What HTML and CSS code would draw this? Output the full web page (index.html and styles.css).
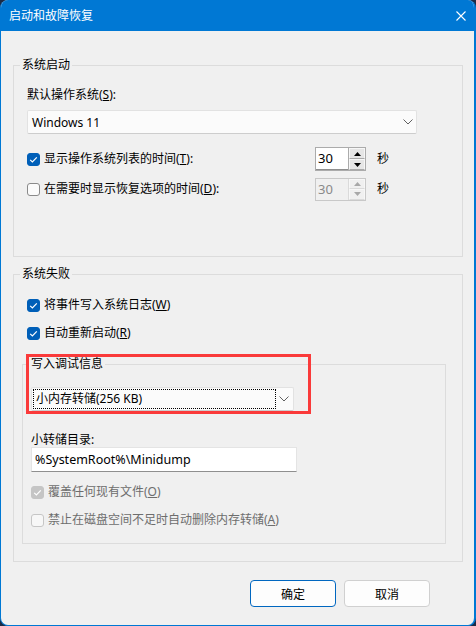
FILE: index.html
```html
<!DOCTYPE html>
<html lang="zh-CN">
<head>
    <meta charset="UTF-8">
    <title>启动和故障恢复</title>
    <link rel="stylesheet" href="styles.css">
</head>
<body>
    <div class="window">
        <div class="titlebar">
            <span class="title">启动和故障恢复</span>
            <svg class="close" width="10" height="10" viewBox="0 0 10 10">
                <path d="M0.5 0.5 L9.5 9.5 M9.5 0.5 L0.5 9.5" stroke="#fff" stroke-width="1.1" fill="none"/>
            </svg>
        </div>

        <div class="content">
            <fieldset class="group startup">
                <legend>系统启动</legend>
                <div class="field-label">默认操作系统(<u>S</u>):</div>
                <div class="combo combo-os">
                    <span>Windows 11</span>
                    <svg class="chevron" width="10" height="6" viewBox="0 0 10 6"><path d="M0.5 0.5 L5 5 L9.5 0.5" stroke="#606060" fill="none"/></svg>
                </div>

                <div class="timer-row first">
                    <label class="check">
                        <span class="box checked">
                            <svg width="13" height="13" viewBox="0 0 13 13"><path d="M3.2 6.8 L5.4 9 L9.8 4.3" stroke="#fff" stroke-width="1.2" fill="none"/></svg>
                        </span>
                        <span>显示操作系统列表的时间(<u>T</u>):</span>
                    </label>
                    <div class="spin">
                        <span class="spin-value">30</span>
                        <span class="spin-buttons">
                            <span class="spin-btn"><svg width="7" height="4" viewBox="0 0 7 4"><path d="M0 4 L3.5 0 L7 4 Z" fill="#000"/></svg></span>
                            <span class="spin-btn"><svg width="7" height="4" viewBox="0 0 7 4"><path d="M0 0 L3.5 4 L7 0 Z" fill="#000"/></svg></span>
                        </span>
                    </div>
                    <span class="unit">秒</span>
                </div>

                <div class="timer-row">
                    <label class="check">
                        <span class="box"></span>
                        <span>在需要时显示恢复选项的时间(<u>D</u>):</span>
                    </label>
                    <div class="spin disabled">
                        <span class="spin-value">30</span>
                        <span class="spin-buttons">
                            <span class="spin-btn"><svg width="7" height="4" viewBox="0 0 7 4"><path d="M0 4 L3.5 0 L7 4 Z" fill="#a8a8a8"/></svg></span>
                            <span class="spin-btn"><svg width="7" height="4" viewBox="0 0 7 4"><path d="M0 0 L3.5 4 L7 0 Z" fill="#a8a8a8"/></svg></span>
                        </span>
                    </div>
                    <span class="unit">秒</span>
                </div>
            </fieldset>

            <fieldset class="group failure">
                <legend>系统失败</legend>
                <label class="check row-log">
                    <span class="box checked">
                        <svg width="13" height="13" viewBox="0 0 13 13"><path d="M3.2 6.8 L5.4 9 L9.8 4.3" stroke="#fff" stroke-width="1.2" fill="none"/></svg>
                    </span>
                    <span>将事件写入系统日志(<u>W</u>)</span>
                </label>
                <label class="check row-restart">
                    <span class="box checked">
                        <svg width="13" height="13" viewBox="0 0 13 13"><path d="M3.2 6.8 L5.4 9 L9.8 4.3" stroke="#fff" stroke-width="1.2" fill="none"/></svg>
                    </span>
                    <span>自动重新启动(<u>R</u>)</span>
                </label>

                <fieldset class="group debug">
                    <legend>写入调试信息</legend>
                    <div class="combo combo-dump">
                        <span class="focus-rect">小内存转储(256 KB)</span>
                        <svg class="chevron" width="10" height="6" viewBox="0 0 10 6"><path d="M0.5 0.5 L5 5 L9.5 0.5" stroke="#606060" fill="none"/></svg>
                    </div>
                    <div class="field-label dump-label">小转储目录:</div>
                    <div class="textbox">%SystemRoot%\Minidump</div>

                    <label class="check disabled row-overwrite">
                        <span class="box checked">
                            <svg width="13" height="13" viewBox="0 0 13 13"><path d="M3.2 6.8 L5.4 9 L9.8 4.3" stroke="#fff" stroke-width="1.2" fill="none"/></svg>
                        </span>
                        <span>覆盖任何现有文件(<u>O</u>)</span>
                    </label>
                    <label class="check disabled row-autodelete">
                        <span class="box"></span>
                        <span>禁止在磁盘空间不足时自动删除内存转储(<u>A</u>)</span>
                    </label>
                </fieldset>
            </fieldset>

            <div class="buttons">
                <button class="btn default">确定</button>
                <button class="btn">取消</button>
            </div>
        </div>

        <!-- annotation box drawn over the dialog -->
        <div class="highlight"></div>
    </div>
</body>
</html>
```

FILE: styles.css
```css
* {
    box-sizing: border-box;
}

body {
    margin: 0;
    background: #1c2b45;
    font-family: "Noto Sans", "Noto Sans CJK SC", sans-serif;
    font-size: 12px;
    color: #000;
}

u {
    text-decoration: underline;
    text-underline-offset: 1px;
}

.window {
    position: relative;
    width: 476px;
    height: 626px;
    background: #f0f0f0;
    border-left: 1px solid #0078d4;
    border-right: 2px solid #0078d4;
    border-bottom: 1px solid #0078d4;
    border-radius: 8px;
    overflow: hidden;
}

.titlebar {
    height: 31px;
    background: #0078d4;
    color: #fff;
    display: flex;
    align-items: center;
    justify-content: space-between;
    padding: 0 8px;
}

.title {
    font-size: 12px;
    line-height: 16px;
}

.content {
    padding: 26px 11px 0 12px;
}

/* group boxes */
.group {
    margin: 0;
    padding: 0;
    min-inline-size: 0;
    border: 1px solid #dcdcdc;
}

.group legend {
    padding: 0 2px;
    line-height: 16px;
}

.startup {
    padding: 0 0 55px 13px;
}

.failure {
    margin-top: 9px;
    padding: 0 0 17px 13px;
}

.startup > legend,
.failure > legend {
    margin-left: -7px;
}

.debug {
    margin: 15px 16px 0 -5px;
    padding: 0 0 15px 8px;
}

.debug > legend {
    margin-left: -2px;
}

.field-label {
    line-height: 16px;
    margin-top: 14px;
}

/* combo boxes */
.combo {
    display: flex;
    align-items: center;
    justify-content: space-between;
    height: 24px;
    background: #fbfbfb;
    border: 1px solid #e2e2e2;
    border-bottom-color: #cdcdcd;
    border-radius: 2px;
}

.combo-os {
    width: 390px;
    margin-top: 7px;
    padding: 0 3px 0 4px;
}

.combo-dump {
    width: 263px;
    margin-top: 15px;
    padding: 0 4px 0 1px;
}

.focus-rect {
    width: 243px;
    height: 20px;
    line-height: 18px;
    padding-left: 2px;
    border: 1px dotted #000;
}

/* check boxes */
.check {
    display: flex;
    align-items: center;
    line-height: 16px;
}

.box {
    width: 13px;
    height: 13px;
    margin-right: 4px;
    border: 1px solid #8a8a8a;
    border-radius: 3px;
    background: #fbfbfb;
    flex-shrink: 0;
}

.box svg {
    display: block;
    margin: -1px;
}

.box.checked {
    background: #005fb8;
    border-color: #005fb8;
}

.check.disabled {
    color: #6d6d6d;
}

.check.disabled .box {
    border-color: #c6c6c6;
    background: #f7f7f7;
}

.check.disabled .box.checked {
    background: #c5c5c5;
    border-color: #c5c5c5;
}

.row-log {
    margin-top: 15px;
}

.row-restart {
    margin-top: 12px;
}

.row-overwrite {
    margin-top: 12px;
}

.row-autodelete {
    margin-top: 12px;
}

/* timer rows with spin boxes */
.timer-row {
    display: flex;
    align-items: center;
    height: 24px;
    margin-top: 6px;
}

.timer-row.first {
    margin-top: 13px;
}

.timer-row .check {
    width: 288px;
}

.spin {
    display: flex;
    width: 51px;
    height: 24px;
    border: 1px solid #ababab;
    background: #fff;
}

.spin-value {
    flex: 1;
    line-height: 21px;
    padding-left: 2px;
    font-size: 13px;
    border-bottom: 1px solid #8f8f8f;
}

.spin-buttons {
    display: flex;
    flex-direction: column;
    width: 17px;
    border-left: 1px solid #ababab;
}

.spin-btn {
    flex: 1;
    display: flex;
    align-items: center;
    justify-content: center;
    background: #e6e6e6;
    border: 1px solid #f7f7f7;
    border-bottom-color: #a9a9a9;
}

.spin.disabled {
    background: #f0f0f0;
    border-color: #c8c8c8;
    height: 23px;
}

.spin.disabled .spin-value {
    color: #8a8a8a;
    border-bottom: none;
}

.spin.disabled .spin-buttons {
    border-left-color: #dadada;
}

.spin.disabled .spin-btn {
    background: #f0f0f0;
    border-bottom-color: #dadada;
}

.unit {
    margin-left: 11px;
    line-height: 16px;
}

/* dump folder */
.dump-label {
    margin-top: 21px;
    line-height: 15px;
}

.textbox {
    width: 266px;
    height: 25px;
    line-height: 23px;
    padding-left: 3px;
    background: #fff;
    border: 1px solid #e4e4e4;
    border-bottom-color: #8f8f8f;
    font-size: 12.5px;
}

/* dialog buttons */
.buttons {
    display: flex;
    justify-content: flex-end;
    gap: 8px;
    margin-top: 18px;
    padding-right: 33px;
}

.btn {
    width: 86px;
    height: 27px;
    font-family: inherit;
    font-size: 12px;
    color: #000;
    background: #fdfdfd;
    border: 1px solid #d0d0d0;
    border-radius: 4px;
}

.btn.default {
    border-color: #0067c0;
}

.highlight {
    position: absolute;
    left: 25px;
    top: 354px;
    width: 285px;
    height: 60px;
    border: 3px solid #fa3a3a;
}
```
